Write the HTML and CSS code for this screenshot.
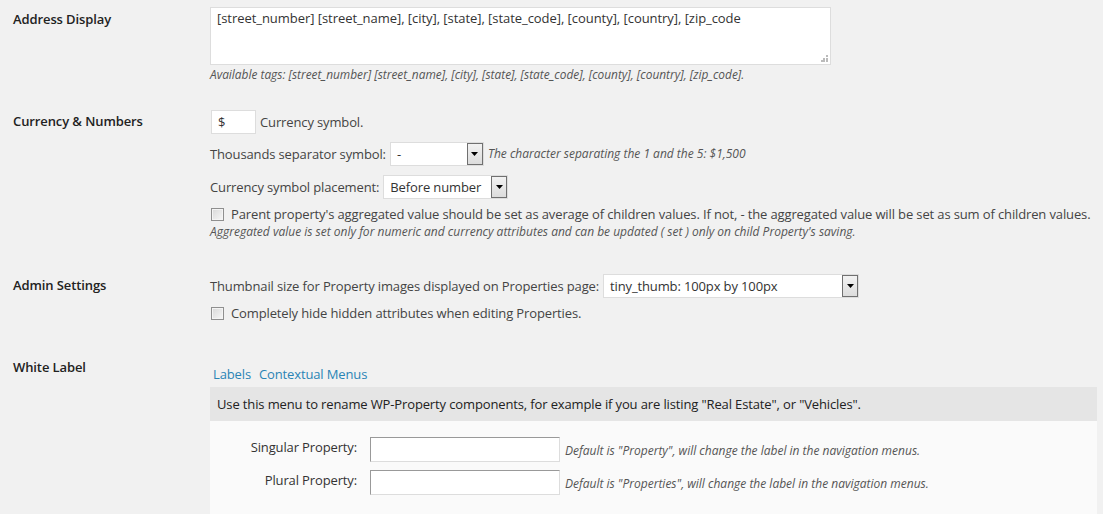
FILE: index.html
```html
<!DOCTYPE html>
<html>
<head>
<meta charset="utf-8">
<link rel="stylesheet" href="styles.css">
</head>
<body>
<div class="settings">
  <div class="row row-address">
    <div class="row-label">Address Display</div>
    <div class="row-field">
      <div class="textarea-wrap">
        <textarea class="address-area">[street_number] [street_name], [city], [state], [state_code], [county], [country], [zip_code</textarea>
        <svg class="grip" width="7" height="7" viewBox="0 0 7 7"><rect x="5" y="0" width="2" height="2" fill="#bbb"/><rect x="2" y="3" width="2" height="2" fill="#bbb"/><rect x="5" y="3" width="2" height="2" fill="#bbb"/><rect x="0" y="5" width="2" height="2" fill="#bbb"/><rect x="2" y="5" width="2" height="2" fill="#bbb"/><rect x="5" y="5" width="2" height="2" fill="#bbb"/></svg>
      </div>
      <div class="desc desc-tags">Available tags: [street_number] [street_name], [city], [state], [state_code], [county], [country], [zip_code].</div>
    </div>
  </div>

  <div class="row row-currency">
    <div class="row-label">Currency &amp; Numbers</div>
    <div class="row-field">
      <div class="line line-symbol">
        <input class="text-input symbol-input" type="text" value="$">
        <span>Currency symbol.</span>
      </div>
      <div class="line line-sep">
        <span>Thousands separator symbol:</span>
        <div class="select select-sep"><span class="select-value">-</span><span class="select-btn"><svg width="7" height="4" viewBox="0 0 7 4"><path d="M0 0h7L3.5 4z" fill="#000"/></svg></span></div>
        <span class="desc">The character separating the 1 and the 5: $1,500</span>
      </div>
      <div class="line line-place">
        <span>Currency symbol placement:</span>
        <div class="select select-place"><span class="select-value">Before number</span><span class="select-btn"><svg width="7" height="4" viewBox="0 0 7 4"><path d="M0 0h7L3.5 4z" fill="#000"/></svg></span></div>
      </div>
      <label class="line check-line check-avg">
        <span class="checkbox"></span>
        <span>Parent property's aggregated value should be set as average of children values. If not, - the aggregated value will be set as sum of children values.</span>
      </label>
      <div class="desc desc-small">Aggregated value is set only for numeric and currency attributes and can be updated ( set ) only on child Property's saving.</div>
    </div>
  </div>

  <div class="row row-admin">
    <div class="row-label">Admin Settings</div>
    <div class="row-field">
      <div class="line line-thumb">
        <span>Thumbnail size for Property images displayed on Properties page:</span>
        <div class="select select-thumb"><span class="select-value">tiny_thumb: 100px by 100px</span><span class="select-btn"><svg width="7" height="4" viewBox="0 0 7 4"><path d="M0 0h7L3.5 4z" fill="#000"/></svg></span></div>
      </div>
      <label class="line check-line check-hide">
        <span class="checkbox"></span>
        <span>Completely hide hidden attributes when editing Properties.</span>
      </label>
    </div>
  </div>

  <div class="row row-white">
    <div class="row-label">White Label</div>
    <div class="row-field">
      <div class="tabs">
        <a class="tab" href="#">Labels</a>
        <a class="tab" href="#">Contextual Menus</a>
      </div>
      <div class="notice-bar">Use this menu to rename WP-Property components, for example if you are listing "Real Estate", or "Vehicles".</div>
      <div class="panel">
        <div class="panel-row">
          <span class="panel-label">Singular Property:</span>
          <input class="text-input panel-input" type="text">
          <span class="desc panel-desc">Default is "Property", will change the label in the navigation menus.</span>
        </div>
        <div class="panel-row">
          <span class="panel-label">Plural Property:</span>
          <input class="text-input panel-input" type="text">
          <span class="desc panel-desc">Default is "Properties", will change the label in the navigation menus.</span>
        </div>
      </div>
    </div>
  </div>
</div>
</body>
</html>
```

FILE: styles.css
```css
html, body {
  margin: 0;
  padding: 0;
  background: #f1f1f1;
}
body {
  font-family: "Open Sans", "Liberation Sans", sans-serif;
  font-size: 13px;
  line-height: 18px;
  letter-spacing: -0.13px;
  color: #444;
  overflow: hidden;
  height: 514px;
}
.settings {
  padding: 7px 6px 0 13px;
}
.row {
  display: grid;
  grid-template-columns: 197px 1fr;
}
.row-label {
  color: #222;
  font-weight: 600;
  font-size: 13px;
  line-height: 18px;
  letter-spacing: -0.1px;
}
.row-address .row-label { padding-top: 3px; }
.row-currency { margin-top: 28px; }
.row-currency .row-label { padding-top: 2px; }
.row-admin { margin-top: 34px; }
.row-admin .row-label { padding-top: 2px; }
.row-white { margin-top: 36px; }

.textarea-wrap {
  position: relative;
  width: 621px;
  height: 58px;
}
.address-area {
  box-sizing: border-box;
  width: 621px;
  height: 58px;
  margin: 0;
  border: 1px solid #ddd;
  background: #fff;
  padding: 1px 6px;
  font-family: "Open Sans", "Liberation Sans", sans-serif;
  font-size: 13px;
  line-height: 18px;
  letter-spacing: -0.05px;
  color: #333;
  resize: none;
  outline: none;
  display: block;
}
.grip {
  position: absolute;
  right: 3px;
  bottom: 3px;
}
.desc {
  font-style: italic;
  color: #555;
  font-size: 12px;
  line-height: 16px;
  letter-spacing: 0;
}
.desc-tags {
  margin-top: 1px;
  font-size: 11.9px;
}
.line {
  display: flex;
  align-items: center;
  gap: 4px;
  white-space: nowrap;
}
.text-input {
  box-sizing: border-box;
  margin: 0;
  border: 1px solid #ddd;
  background: #fff;
  font-family: "Open Sans", "Liberation Sans", sans-serif;
  font-size: 13px;
  color: #333;
  outline: none;
}
.symbol-input {
  width: 45px;
  height: 24px;
  padding: 0 6px;
  margin-left: 1px;
}
.line-symbol { height: 24px; }
.line-sep { margin-top: 8px; height: 24px; }
.line-place { margin-top: 9px; height: 24px; }
.select {
  box-sizing: border-box;
  display: flex;
  align-items: stretch;
  height: 24px;
  border: 1px solid #ddd;
  background: #fff;
  color: #333;
}
.select-value {
  flex: 1;
  padding: 0 6px;
  line-height: 22px;
}
.select-btn {
  box-sizing: border-box;
  width: 16px;
  border: 1px solid #707070;
  background: linear-gradient(#f2f2f2, #dcdcdc);
  display: flex;
  align-items: center;
  justify-content: center;
}
.select-sep { width: 94px; }
.select-place { width: 125px; }
.select-thumb { width: 256px; height: 24px; }
.check-line {
  margin-top: 6px;
  gap: 7px;
  height: 18px;
}
.checkbox {
  box-sizing: border-box;
  width: 13px;
  height: 13px;
  margin-left: 1px;
  border: 1px solid #8f8f8f;
  background: linear-gradient(135deg, #d8d8d8, #f7f7f7);
  box-shadow: inset 0 0 0 1px #f4f4f4;
  flex: none;
}
.desc-small {
  margin-top: 1px;
}
.line-thumb { height: 24px; gap: 4px; }
.check-hide { margin-top: 6px; }

.tabs {
  padding: 7px 0 0 3px;
  display: flex;
  gap: 8px;
}
.tab {
  color: #2a84b5;
  text-decoration: none;
  font-size: 13px;
  line-height: 18px;
}
.notice-bar {
  margin-top: 4px;
  background: #e5e5e5;
  color: #222;
  height: 34px;
  line-height: 34px;
  padding: 0 7px;
}
.panel {
  background: #fafafa;
  padding: 16px 0 30px;
  display: flex;
  flex-direction: column;
  gap: 8px;
}
.panel-row {
  display: grid;
  grid-template-columns: 147px 190px 1fr;
  column-gap: 13px;
  align-items: start;
}
.panel-label {
  text-align: right;
  color: #333;
  line-height: 18px;
  padding-top: 1px;
}
.panel-input {
  width: 190px;
  height: 25px;
  border-color: #999 #ddd #ddd #999;
  padding: 0 5px;
}
.panel-desc {
  margin-left: -8px;
  padding-top: 6px;
}
```
